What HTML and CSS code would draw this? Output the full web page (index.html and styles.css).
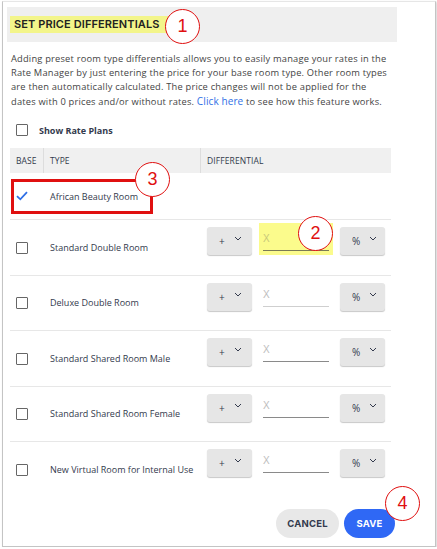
FILE: index.html
```html
<!DOCTYPE html>
<html>
<head>
<meta charset="utf-8">
<link rel="stylesheet" href="styles.css">
</head>
<body>
<div class="panel">
  <div class="head">
    <span class="title">SET PRICE DIFFERENTIALS</span>
  </div>
  <p class="desc">Adding preset room type differentials allows you to easily manage your rates in the<br>Rate Manager by just entering the price for your base room type. Other room types<br>are then automatically calculated. The price changes will not be applied for the<br>dates with 0 prices and/or without rates. <a class="link">Click here</a> to see how this feature works.</p>
  <div class="show"><span class="cb"></span><span class="show-label">Show Rate Plans</span></div>

  <div class="table">
    <div class="thead">
      <div class="th th-base">BASE</div>
      <div class="th th-type">TYPE</div>
      <div class="th th-diff">DIFFERENTIAL</div>
    </div>
    <div class="row row-base">
      <div class="c-base"><svg class="check" width="12" height="10" viewBox="0 0 12 10"><path d="M1 5.2 L4.3 8.3 L11 1.2" fill="none" stroke="#2f6fe6" stroke-width="1.8"/></svg></div>
      <div class="c-type">African Beauty Room</div>
      <div class="c-diff"></div>
    </div>
    <div class="row">
      <div class="c-base"><span class="cb"></span></div>
      <div class="c-type">Standard Double Room</div>
      <div class="c-diff">
        <div class="sel"><span>+</span><svg class="chev" width="8" height="5" viewBox="0 0 8 5"><path d="M1 1 L4 4 L7 1" fill="none" stroke="#333a4d" stroke-width="1"/></svg></div>
        <div class="inp hl"><span class="ph">X</span></div>
        <div class="sel"><span>%</span><svg class="chev" width="8" height="5" viewBox="0 0 8 5"><path d="M1 1 L4 4 L7 1" fill="none" stroke="#333a4d" stroke-width="1"/></svg></div>
      </div>
    </div>
    <div class="row">
      <div class="c-base"><span class="cb"></span></div>
      <div class="c-type">Deluxe Double Room</div>
      <div class="c-diff">
        <div class="sel"><span>+</span><svg class="chev" width="8" height="5" viewBox="0 0 8 5"><path d="M1 1 L4 4 L7 1" fill="none" stroke="#333a4d" stroke-width="1"/></svg></div>
        <div class="inp light"><span class="ph">X</span></div>
        <div class="sel"><span>%</span><svg class="chev" width="8" height="5" viewBox="0 0 8 5"><path d="M1 1 L4 4 L7 1" fill="none" stroke="#333a4d" stroke-width="1"/></svg></div>
      </div>
    </div>
    <div class="row">
      <div class="c-base"><span class="cb"></span></div>
      <div class="c-type">Standard Shared Room Male</div>
      <div class="c-diff">
        <div class="sel"><span>+</span><svg class="chev" width="8" height="5" viewBox="0 0 8 5"><path d="M1 1 L4 4 L7 1" fill="none" stroke="#333a4d" stroke-width="1"/></svg></div>
        <div class="inp"><span class="ph">X</span></div>
        <div class="sel"><span>%</span><svg class="chev" width="8" height="5" viewBox="0 0 8 5"><path d="M1 1 L4 4 L7 1" fill="none" stroke="#333a4d" stroke-width="1"/></svg></div>
      </div>
    </div>
    <div class="row">
      <div class="c-base"><span class="cb"></span></div>
      <div class="c-type">Standard Shared Room Female</div>
      <div class="c-diff">
        <div class="sel"><span>+</span><svg class="chev" width="8" height="5" viewBox="0 0 8 5"><path d="M1 1 L4 4 L7 1" fill="none" stroke="#333a4d" stroke-width="1"/></svg></div>
        <div class="inp"><span class="ph">X</span></div>
        <div class="sel"><span>%</span><svg class="chev" width="8" height="5" viewBox="0 0 8 5"><path d="M1 1 L4 4 L7 1" fill="none" stroke="#333a4d" stroke-width="1"/></svg></div>
      </div>
    </div>
    <div class="row row-last">
      <div class="c-base"><span class="cb"></span></div>
      <div class="c-type">New Virtual Room for Internal Use</div>
      <div class="c-diff">
        <div class="sel"><span>+</span><svg class="chev" width="8" height="5" viewBox="0 0 8 5"><path d="M1 1 L4 4 L7 1" fill="none" stroke="#333a4d" stroke-width="1"/></svg></div>
        <div class="inp"><span class="ph">X</span></div>
        <div class="sel"><span>%</span><svg class="chev" width="8" height="5" viewBox="0 0 8 5"><path d="M1 1 L4 4 L7 1" fill="none" stroke="#333a4d" stroke-width="1"/></svg></div>
      </div>
    </div>
  </div>

  <div class="footer">
    <button class="btn cancel">CANCEL</button>
    <button class="btn save">SAVE</button>
  </div>

  <div class="redbox"></div>
  <div class="num n1">1</div>
  <div class="num n2">2</div>
  <div class="num n3">3</div>
  <div class="num n4">4</div>
</div>
</body>
</html>
```

FILE: styles.css
```css
html, body {
  margin: 0;
  padding: 0;
  background: #ffffff;
}
.panel {
  position: relative;
  box-sizing: border-box;
  width: 434px;
  height: 546px;
  margin: 1px 0 0 2px;
  padding: 5px 0 0 4px;
  border: 1px solid #c4c4c4;
  border-top-color: #e6e6e6;
  box-shadow: 1px 1px 2px rgba(0,0,0,0.18);
  font-family: "Open Sans", "Liberation Sans", sans-serif;
  color: #3c3c3c;
}
.head {
  width: 390px;
  height: 35px;
  background: #efefef;
  display: flex;
  align-items: center;
  padding-left: 3px;
  box-sizing: border-box;
}
.title {
  background: #f3f58a;
  font-family: "Inter", "Open Sans", sans-serif;
  font-weight: 600;
  font-size: 11px;
  color: #222;
  padding: 2px 12px 2px 4px;
  line-height: 13px;
  letter-spacing: 0.1px;
}
.desc {
  margin: 10px 0 0 4px;
  width: 400px;
  font-size: 9.3px;
  line-height: 14px;
  color: #444;
  letter-spacing: 0.2px;
  white-space: nowrap;
}
.link {
  color: #2f6fe6;
  font-size: 10px;
  letter-spacing: 0.1px;
}
.show {
  display: flex;
  align-items: center;
  margin: 14px 0 0 9px;
  height: 14px;
}
.show-label {
  margin-left: 11px;
  font-size: 9px;
  font-weight: 700;
  color: #333a4d;
}
.cb {
  display: inline-block;
  width: 10px;
  height: 10px;
  border: 1.5px solid #666;
  border-radius: 1px;
  background: #fff;
}
.table {
  margin: 11px 0 0 3px;
  width: 381px;
}
.thead {
  display: grid;
  grid-template-columns: 33px 157px 191px;
  height: 25px;
  background: #f0f0f0;
}
.th {
  display: flex;
  align-items: center;
  padding-left: 6px;
  font-size: 8.5px;
  color: #333a4d;
  letter-spacing: 0.1px;
}
.th-type, .th-diff {
  border-left: 1px solid #dddddd;
}
.row {
  display: grid;
  grid-template-columns: 33px 157px 191px;
  height: 55.5px;
  border-bottom: 1px solid #e7e7e7;
  box-sizing: border-box;
}
.row-base {
  height: 47px;
}
.row-last {
  border-bottom: none;
}
.c-base {
  display: flex;
  align-items: center;
  padding-left: 6px;
  padding-top: 1px;
}
.check {
  margin-top: -2px;
}
.c-type {
  display: flex;
  align-items: center;
  padding-left: 7px;
  font-size: 9px;
  color: #333a4d;
}
.c-diff {
  display: flex;
  align-items: flex-start;
  padding: 7px 0 0 7px;
  gap: 11px;
}
.sel {
  width: 45px;
  height: 28px;
  box-sizing: border-box;
  background: #e6e6e6;
  border-radius: 3px;
  box-shadow: 0 1px 1px rgba(0,0,0,0.22);
  display: flex;
  align-items: center;
  padding-left: 12px;
  font-size: 10px;
  color: #333a4d;
}
.sel .chev {
  margin-left: 9px;
  margin-top: -5px;
}
.inp {
  width: 66px;
  height: 24px;
  box-sizing: border-box;
  border-bottom: 1px solid #8a8a8a;
  font-size: 10px;
  padding-top: 4px;
  margin-top: 0;
}
.inp.light {
  border-bottom-color: #cfcfcf;
}
.inp.hl {
  background: #fbfb8c;
  box-shadow: 0 0 0 4px #fbfb8c;
  border-bottom-color: #7b7b55;
}
.ph {
  color: #bdbdbd;
  font-family: "Liberation Sans", sans-serif;
}
.inp.hl .ph {
  color: #c8c87a;
}
.footer {
  display: flex;
  justify-content: flex-end;
  gap: 5px;
  width: 388px;
  margin-top: 11px;
}
.btn {
  height: 29px;
  border: none;
  border-radius: 15px;
  font-family: "Inter", "Open Sans", sans-serif;
  font-size: 9.5px;
  font-weight: 700;
  letter-spacing: 0.2px;
  padding: 0;
}
.cancel {
  width: 63px;
  background: #e8e8e8;
  color: #333a4d;
}
.save {
  width: 51px;
  background: #2f68f5;
  color: #fff;
}
.redbox {
  position: absolute;
  left: 8px;
  top: 177px;
  width: 136px;
  height: 29px;
  border: 3px solid #e01010;
}
.num {
  position: absolute;
  width: 33px;
  height: 33px;
  border: 1.7px solid #e01010;
  border-radius: 50%;
  background: #fff;
  color: #e01010;
  font-family: "Liberation Sans", sans-serif;
  font-size: 18px;
  display: flex;
  align-items: center;
  justify-content: center;
}
.n1 { left: 162px; top: 7px; }
.n2 { left: 295px; top: 214px; }
.n3 { left: 132px; top: 160px; }
.n4 { left: 382px; top: 484px; }
```
